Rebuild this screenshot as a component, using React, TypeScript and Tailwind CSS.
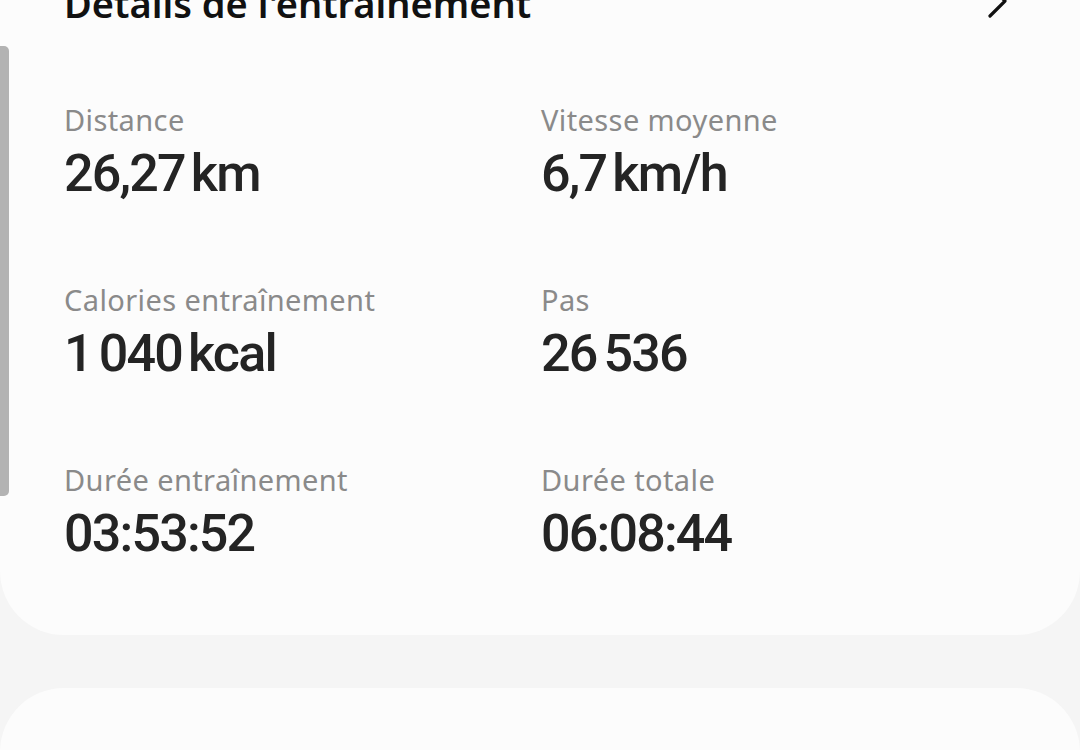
import React from "react";

type Stat = { label: string; parts: string[]; unit: string };

const stats: Stat[] = [
  { label: "Distance", parts: ["26,27"], unit: "km" },
  { label: "Vitesse moyenne", parts: ["6,7"], unit: "km/h" },
  { label: "Calories entraînement", parts: ["1", "040"], unit: "kcal" },
  { label: "Pas", parts: ["26", "536"], unit: "" },
  { label: "Durée entraînement", parts: ["03:53:52"], unit: "" },
  { label: "Durée totale", parts: ["06:08:44"], unit: "" },
];

export default function App() {
  return (
    <div
      className="relative w-[1080px] h-[750px] overflow-hidden bg-[#f5f5f5]"
      style={{ fontFamily: "Roboto, 'Noto Sans', sans-serif" }}
    >
      <div className="flex flex-col">
        <div className="-mt-[16px] bg-[#fcfcfc] rounded-b-[64px] pl-[64px] pr-[72px] pb-[71px]">
          <div className="flex items-center justify-between h-[38px] mb-[80px]">
            <span
              className="text-[38px] leading-[38px] font-semibold text-[#111111] whitespace-nowrap"
              style={{ fontFamily: "'Noto Sans', Roboto, sans-serif" }}
            >
              Détails de l'entraînement
            </span>
            <svg width="24" height="38" viewBox="0 0 24 38" className="mr-[-2px] mt-[-4px]">
              <path
                d="M4 4 L19 19 L4 34"
                fill="none"
                stroke="#111111"
                strokeWidth="3.2"
                strokeLinecap="round"
                strokeLinejoin="round"
              />
            </svg>
          </div>
          <div className="grid grid-cols-[477px_1fr] gap-y-[78px]">
            {stats.map((s) => (
              <div key={s.label} className="flex flex-col gap-[6px]">
                <span
                  className="text-[29px] leading-[36px] text-[#8a8a8a] tracking-[0.4px] whitespace-nowrap"
                  style={{ fontFamily: "'Noto Sans', Roboto, sans-serif" }}
                >
                  {s.label}
                </span>
                <span className="text-[52px] leading-[60px] font-medium text-[#242424] tracking-[-1.8px] whitespace-nowrap">
                  {s.parts.map((p, i) => (
                    <span key={i} className={i > 0 ? "ml-[7px]" : ""}>
                      {p}
                    </span>
                  ))}
                  {s.unit && <span className="ml-[6px]">{s.unit}</span>}
                </span>
              </div>
            ))}
          </div>
        </div>
        <div className="mt-[53px] bg-[#fcfcfc] rounded-t-[64px] h-[200px]" />
      </div>
      <div className="absolute left-0 top-[46px] w-[9px] h-[450px] bg-[#b3b3b3] rounded-r-[5px]" />
    </div>
  );
}
